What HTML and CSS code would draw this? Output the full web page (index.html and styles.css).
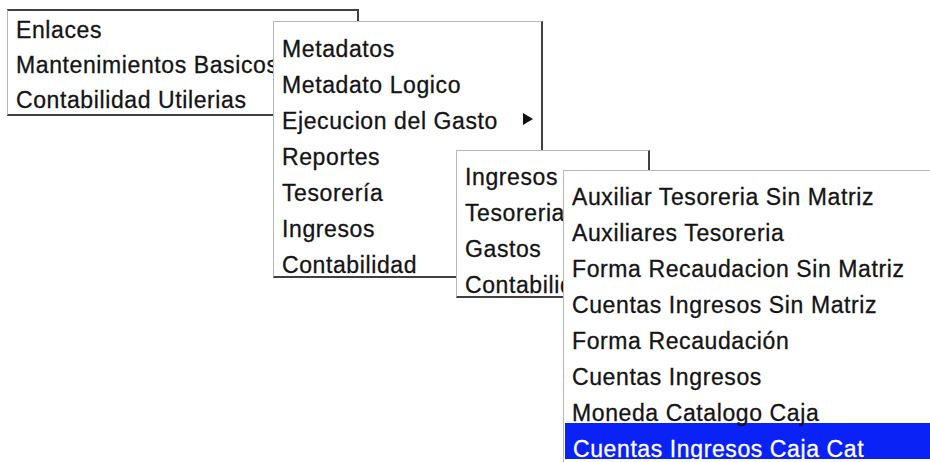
FILE: index.html
```html
<!DOCTYPE html>
<html lang="es">
<head>
    <meta charset="UTF-8">
    <meta name="viewport" content="width=device-width, initial-scale=1.0">
    <title>Menu</title>

    <link rel="stylesheet" href="styles.css">
</head>
<body>

<div id="screen">
    <ul class="popup" id="menu-main">
        <li>Enlaces</li>
        <li>Mantenimientos Basicos</li>
        <li>Contabilidad Utilerias</li>
    </ul>

    <ul class="popup sub" id="menu-utilerias">
        <li>Metadatos</li>
        <li>Metadato Logico</li>
        <li class="has-sub">Ejecucion del Gasto <span class="arrow"></span></li>
        <li>Reportes</li>
        <li>Tesorería</li>
        <li>Ingresos</li>
        <li>Contabilidad</li>
    </ul>

    <ul class="popup sub" id="menu-reportes">
        <li>Ingresos</li>
        <li>Tesoreria</li>
        <li>Gastos</li>
        <li>Contabilidad</li>
    </ul>

    <ul class="popup sub" id="menu-ingresos">
        <li>Auxiliar Tesoreria Sin Matriz</li>
        <li>Auxiliares Tesoreria</li>
        <li>Forma Recaudacion Sin Matriz</li>
        <li>Cuentas Ingresos Sin Matriz</li>
        <li>Forma Recaudación</li>
        <li>Cuentas Ingresos</li>
        <li>Moneda Catalogo Caja</li>
        <li class="selected">Cuentas Ingresos Caja Cat</li>
    </ul>
</div>

</body>
</html>
```

FILE: styles.css
```css
* {
    box-sizing: border-box;
}

html, body {
    margin: 0;
    padding: 0;
    height: 100%;
    overflow: hidden;
    background-color: white;
}

#screen {
    position: relative;
    width: 930px;
    height: 462px;
    font-family: 'Liberation Sans', Arial, sans-serif;
    font-size: 23px;
    letter-spacing: 0.6px;
    -webkit-text-stroke: 0.3px currentColor;
    color: #141414;
}

/* popup menus cascade over each other */
.popup {
    position: absolute;
    margin: 0;
    padding: 0;
    list-style: none;
    background-color: white;
    overflow: hidden;
    border-top: 1px solid #b8b8b8;
    border-left: 1px solid #b8b8b8;
    border-right: 2px solid #404040;
    border-bottom: 2px solid #404040;
}

.popup > li {
    white-space: nowrap;
    padding-left: 8px;
}

#menu-main {
    left: 7px;
    top: 9px;
    width: 352px;
    height: 107px;
    border-top: 2px solid #404040;
}
#menu-main > li {
    height: 35px;
    padding-top: 4px;
    line-height: 31px;
}

.sub > li {
    height: 36px;
    padding-top: 16px;
    line-height: 20px;
}

#menu-utilerias {
    left: 273px;
    top: 21px;
    width: 270px;
    height: 257px;
    padding-top: 1px;
}

#menu-reportes {
    left: 456px;
    top: 150px;
    width: 194px;
    height: 148px;
}

#menu-ingresos {
    left: 563px;
    top: 170px;
    width: 420px;
    height: 310px;
    border-right: none;
}

.has-sub {
    display: flex;
    justify-content: space-between;
    padding-right: 8px;
}
.arrow {
    align-self: flex-start;
    margin-top: 2px;
    width: 0;
    height: 0;
    border-left: 10px solid #111;
    border-top: 6px solid transparent;
    border-bottom: 6px solid transparent;
}

.selected {
    margin-left: 1px;
    background-color: #0b22f6;
    color: white;
    text-decoration: underline;
    text-decoration-thickness: 2px;
    text-underline-offset: 2px;
}
```
